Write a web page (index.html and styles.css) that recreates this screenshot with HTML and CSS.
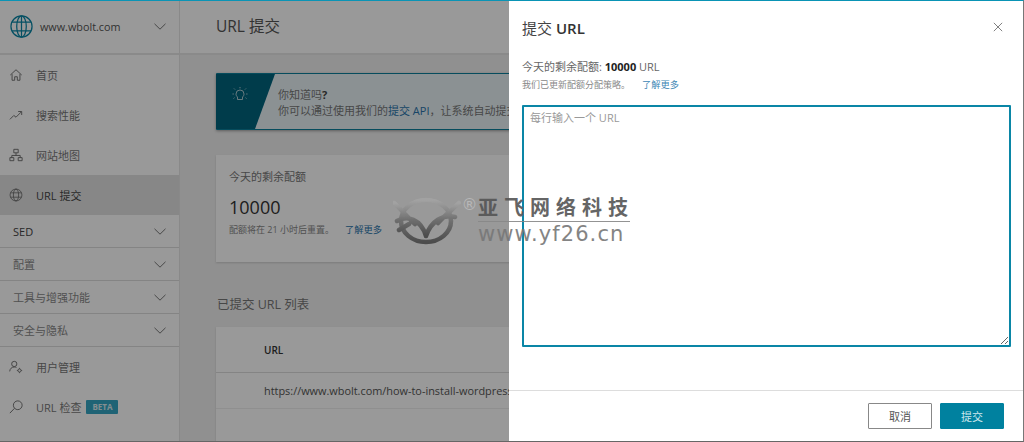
FILE: index.html
```html
<!DOCTYPE html>
<html lang="zh-CN">
<head>
<meta charset="utf-8">
<title>提交 URL</title>
<link rel="stylesheet" href="styles.css">
</head>
<body>
<div class="app">
  <aside class="sidebar">
    <div class="site">
      <svg class="globe" viewBox="0 0 24 24"><g fill="none" stroke="#0a86a6" stroke-width="1.300"><circle cx="12" cy="12" r="11"/><ellipse cx="12" cy="12" rx="5" ry="11"/><path d="M12 1v22M2.200 7.500h19.600M2.200 16.500h19.600"/></g></svg>
      <span class="site-name">www.wbolt.com</span>
      <svg class="chev" viewBox="0 0 12 7"><path d="M.5.800 6 6.200 11.500.8" fill="none" stroke="#555" stroke-width=".8"/></svg>
    </div>
    <nav class="nav">
      <a class="item"><svg class="ic" viewBox="0 0 16 16"><path d="M1.500 8 8 2l6.500 6M3.500 7v7h3v-4h3v4h3V7" fill="none" stroke="#666" stroke-width="1"/></svg><span>首页</span></a>
      <a class="item"><svg class="ic" viewBox="0 0 16 16"><path d="M1 13l4.500-4.500 2.500 2L14 4.500M10.500 4H14.500V8" fill="none" stroke="#666" stroke-width="1"/></svg><span>搜索性能</span></a>
      <a class="item"><svg class="ic" viewBox="0 0 16 16"><path d="M5.500 1.500h5v4h-5zM1 11h4.500v3.500H1zM10.500 11H15v3.500h-4.500zM8 5.500V8.500M3.200 11V8.500h9.600V11" fill="none" stroke="#666" stroke-width="1"/></svg><span>网站地图</span></a>
      <a class="item active"><svg class="ic" viewBox="0 0 16 16"><g fill="none" stroke="#666" stroke-width=".9"><circle cx="8" cy="8" r="6.800"/><ellipse cx="8" cy="8" rx="3" ry="6.800"/><path d="M1.800 5.500h12.400M1.800 10.500h12.400"/></g></svg><span>URL 提交</span></a>
    </nav>
    <div class="acc strong"><span>SED</span><svg class="chev" viewBox="0 0 12 7"><path d="M.5.800 6 6.200 11.500.8" fill="none" stroke="#555" stroke-width=".8"/></svg></div>
    <div class="acc"><span>配置</span><svg class="chev" viewBox="0 0 12 7"><path d="M.5.800 6 6.200 11.500.8" fill="none" stroke="#555" stroke-width=".8"/></svg></div>
    <div class="acc"><span>工具与增强功能</span><svg class="chev" viewBox="0 0 12 7"><path d="M.5.800 6 6.200 11.500.8" fill="none" stroke="#555" stroke-width=".8"/></svg></div>
    <div class="acc"><span>安全与隐私</span><svg class="chev" viewBox="0 0 12 7"><path d="M.5.800 6 6.200 11.500.8" fill="none" stroke="#555" stroke-width=".8"/></svg></div>
    <nav class="nav">
      <a class="item"><svg class="ic" viewBox="0 0 16 16"><g fill="none" stroke="#666" stroke-width="1"><circle cx="6" cy="4.500" r="3"/><path d="M.8 13c.3-3 2.200-5 5.200-5 1 0 1.800.2 2.500.6"/><circle cx="12" cy="12" r="1.800"/><path d="M12 9v1M12 14v1M9 12h1M14 12h1"/></g></svg><span>用户管理</span></a>
      <a class="item"><svg class="ic" viewBox="0 0 16 16"><g fill="none" stroke="#666" stroke-width="1"><circle cx="10" cy="6" r="5"/><path d="M6.300 9.500 1 15"/></g></svg><span>URL 检查</span><b class="beta">BETA</b></a>
    </nav>
  </aside>
  <main class="main">
    <header class="top"><h1>URL 提交</h1></header>
    <div class="content">
      <div class="banner">
        <div class="banner-mark"><svg class="bulb" viewBox="0 0 16 16"><g fill="none" stroke="#d8e4e8" stroke-width=".8"><path d="M5.500 10.500C4.500 9.500 4 8.700 4 7.500a4 4 0 0 1 8 0c0 1.200-.5 2-1.500 3v2.500h-5z"/><path d="M8 .5v1.300M2 2l1 1M14 2l-1 1M.5 7.500h1.300M14.200 7.500h1.300M1.500 12l1-.8M14.500 12l-1-.8"/></g></svg></div>
        <div class="banner-text">
          <div>你知道吗<b>?</b></div>
          <div>你可以通过使用我们的<a>提交 API</a>，让系统自动提交网址</div>
        </div>
      </div>
      <section class="card quota">
        <h3>今天的剩余配额</h3>
        <div class="big">10000</div>
        <p>配额将在 21 小时后重置。<a>了解更多</a></p>
      </section>
      <h2>已提交 URL 列表</h2>
      <section class="card table">
        <div class="th">URL</div>
        <div class="td">https://www.wbolt.com/how-to-install-wordpress-on-localhost.html</div>
      </section>
    </div>
  </main>
  <div class="scrim"></div>
  <aside class="drawer">
    <div class="d-head"><h2>提交 <b>URL</b></h2><svg class="close" viewBox="0 0 12 12"><path d="M1 1l10 10M11 1 1 11" fill="none" stroke="#666" stroke-width="1"/></svg></div>
    <div class="d-body">
      <div class="q1">今天的剩余配额: <b>10000</b> URL</div>
      <div class="q2">我们已更新配额分配策略。<a>了解更多</a></div>
      <textarea class="input" placeholder="每行输入一个 URL"></textarea>
    </div>
    <div class="d-foot"><button class="btn">取消</button><button class="btn primary">提交</button></div>
  </aside>
  <div class="mark">
    <svg class="mark-logo" viewBox="0 0 68 48"><defs><linearGradient id="g" x1="0" y1="0" x2="0" y2="1"><stop offset="0" stop-color="#a4a4a4"/><stop offset=".5" stop-color="#6c6c6c"/><stop offset="1" stop-color="#444"/></linearGradient></defs><g fill="none" stroke="url(#g)" stroke-width="4.500" stroke-linecap="round"><ellipse cx="33" cy="24" rx="25" ry="21"/><path d="M1 6C8 12 14 20 22 27M66 6C60 12 52 18 45 26M4 24C14 18 28 22 33 39M62 20C50 17 38 24 33 39M6 33 16 27"/></g></svg>
    <span class="reg">®</span>
    <div class="mark-text"><div class="mark-cn">亚飞网络科技</div><div class="mark-url">www.yf26.cn</div></div>
  </div>
</div>
</body>
</html>
```
FILE: styles.css
```css
* { box-sizing: border-box; }
html, body { margin: 0; height: 100%; overflow: hidden; }
body { font-family: "Open Sans", "Noto Sans CJK SC", sans-serif; color: #333; }
a { color: #1f73b7; }
.app { position: relative; width: 1024px; height: 442px; display: flex; overflow: hidden; background: #f0f0f0; border-top: 1px solid #0a94b5; border-right: 1px solid #777; border-bottom: 1px solid #666; }
.sidebar { width: 180px; flex: none; background: #fff; border-right: 1px solid #e4e4e4; }
.site { height: 54px; display: flex; align-items: center; padding: 0 13px 2px 10px; border-bottom: 2px solid #e6e6e6; }
.globe { width: 23px; height: 23px; margin-right: 7px; flex: none; }
.site-name { flex: 1; font-size: 10.800px; color: #555; }
.chev { width: 12px; height: 7px; flex: none; }
.nav { display: flex; flex-direction: column; }
.item { height: 40px; display: flex; align-items: center; padding: 0 0 1px 9px; font-size: 11px; color: #777; }
.item.active { background: #e2e2e2; color: #444; }
.ic { width: 14px; height: 14px; margin-right: 13px; flex: none; }
.beta { margin-left: 5px; background: #34a6c4; color: #dcecf0; font-size: 8px; padding: 0 6px; height: 14px; line-height: 14px; border-radius: 1px; }
.acc { height: 33px; display: flex; align-items: center; justify-content: space-between; padding: 0 13px 0 13px; border-bottom: 1px solid #ddd; font-size: 11px; color: #888; }
.acc.strong { color: #444; }
.main { flex: 1; min-width: 0; }
.top { height: 54px; background: #fff; border-bottom: 2px solid #e6e6e6; padding: 0 36px 3px; display: flex; align-items: center; }
.top h1 { margin: 0; font-size: 15.500px; font-weight: 400; color: #555; }
.content { padding: 18px 36px 0; }
.banner { height: 57px; display: flex; background: #e8f2f6; border-top: 1px solid #0a7f9c; border-bottom: 1px solid #0a7f9c; box-shadow: 0 1px 3px rgba(0,0,0,.35); border-radius: 1px; }
.banner-mark { width: 59px; flex: none; background: #00647e; clip-path: polygon(0 0, 100% 0, 39px 100%, 0 100%); display: flex; padding: 12px 0 0 16px; }
.bulb { width: 16px; height: 17px; }
.banner-text { font-size: 11px; line-height: 16px; padding: 13px 0 0 3px; color: #777; white-space: nowrap; overflow: hidden; }
.banner-text b { color: #444; }
.banner-text a { color: #2a74ab; }
.card { background: #fff; box-shadow: 0 1px 2px rgba(0,0,0,.15); }
.quota { margin-top: 25px; height: 107px; padding: 14px 13px; }
.quota h3 { margin: 0; font-size: 11px; font-weight: 400; color: #777; line-height: 15px; }
.big { margin-top: 10px; font-size: 18px; line-height: 26px; color: #333; }
.quota p { margin: 3px 0 0; font-size: 9px; line-height: 13px; color: #888; }
.quota p a { margin-left: 11px; font-size: 9.250px; color: #2a74ab; }
.content > h2 { margin: 35px 0 0 1px; font-size: 12.500px; line-height: 16px; font-weight: 400; color: #777; height: 30px; }
.table { height: 120px; overflow: hidden; }
.th { height: 46px; padding: 1px 0 0 48px; display: flex; align-items: center; font-size: 10px; font-weight: 600; border-bottom: 1px solid #ddd; color: #333; }
.td { height: 36px; padding-left: 48px; display: flex; align-items: center; font-size: 10.900px; color: #555; border-bottom: 1px solid #eee; white-space: nowrap; }
.scrim { position: absolute; inset: 0; background: rgba(0,0,0,.4); }
.drawer { position: absolute; left: 509px; top: 0; bottom: 0; right: 0; background: #fff; display: flex; flex-direction: column; }
.d-head { height: 52px; flex: none; display: flex; align-items: center; justify-content: space-between; padding: 0 20px 0 13px; }
.d-head h2 { margin: 0; font-size: 15px; font-weight: 400; color: #444; }
.d-head b { font-weight: 600; color: #333; }
.close { width: 10px; height: 10px; }
.d-body { flex: 1; padding: 6px 13px 0; display: flex; flex-direction: column; min-height: 0; }
.q1 { font-size: 11px; line-height: 16px; color: #666; }
.q1 b { color: #222; }
.q2 { font-size: 9px; line-height: 13px; margin-top: 3px; color: #888; }
.q2 a { margin-left: 12px; font-size: 9.250px; color: #3d87b5; }
.input { margin-top: 14px; width: 489px; height: 242px; flex: none; border: 2px solid #0a86a6; border-radius: 1px; padding: 3px 6px; outline: none; font: 11px/16px "Open Sans", "Noto Sans CJK SC", sans-serif; }
.input::placeholder { color: #999; opacity: 1; }
.d-foot { height: 51px; flex: none; border-top: 1px solid #ddd; display: flex; justify-content: flex-end; align-items: center; gap: 8px; padding: 0 19px 0 0; }
.btn { width: 64px; height: 26px; border: 1px solid #888; border-radius: 1px; background: #fff; font: 11px "Open Sans", "Noto Sans CJK SC", sans-serif; color: #555; }
.btn.primary { background: #00819f; border-color: #00819f; color: #cfe8ee; }
.mark { position: absolute; left: 393px; top: 194px; display: flex; align-items: flex-start; pointer-events: none; opacity: .9; }
.mark-logo { width: 68px; height: 48px; margin-top: 2px; flex: none; }
.reg { font-family: "DejaVu Sans", sans-serif; font-size: 16px; line-height: 20px; color: #bbb; width: 17px; flex: none; text-align: center; overflow: hidden; }
.mark-text { width: 152px; flex: none; }
.mark-cn { font-size: 20px; line-height: 26px; font-weight: 700; letter-spacing: 6px; color: #555; white-space: nowrap; border-bottom: 1px solid #888; }
.mark-url { font-family: "DejaVu Sans", sans-serif; font-size: 21px; line-height: 25px; letter-spacing: 1.100px; color: #777; white-space: nowrap; }
```
